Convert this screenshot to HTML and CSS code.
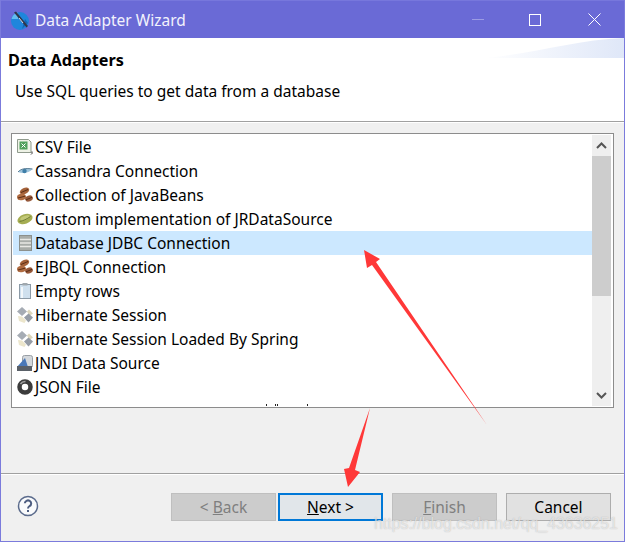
FILE: index.html
```html
<!DOCTYPE html>
<html lang="en">
<head>
<meta charset="utf-8">
<title>Data Adapter Wizard</title>
<link rel="stylesheet" href="styles.css">
</head>
<body>
<svg class="defs" width="0" height="0" aria-hidden="true">
  <defs>
    <symbol id="beans" viewBox="0 0 16 16">
      <ellipse cx="7.500" cy="4" rx="5" ry="3" fill="#a5623a" transform="rotate(-25 7.500 4)"/>
      <ellipse cx="4.500" cy="10" rx="4.500" ry="3.200" fill="#b06c42" transform="rotate(-10 4.500 10)"/>
      <ellipse cx="12" cy="11.500" rx="4" ry="3" fill="#96583a" transform="rotate(-20 12 11.500)"/>
      <path d="M4 5.500l7-3M1 11l7-1.800M9 12.800l6-2.500" stroke="#5a2e16" stroke-width="1" fill="none"/>
    </symbol>
    <symbol id="hibernate" viewBox="0 0 16 16">
      <path d="M5 0l5 4.500L5 9 0 4.500z" fill="#a6acb4"/>
      <path d="M10 4.500l2-2 4 4-3.500 2.500z" fill="#dcd6bc"/>
      <path d="M1 9l4 .5 4 4-1.500 2.500L2 14z" fill="#ece6cc"/>
      <path d="M11.500 6.500l4.500 4-4.500 5-4.500-5z" fill="#959ca6"/>
    </symbol>
  </defs>
</svg>
<div class="window">
  <header class="titlebar">
    <svg class="app-icon" viewBox="0 0 20 20" width="20" height="20" aria-hidden="true">
      <circle cx="10" cy="11" r="9" fill="#1f86dc"/>
      <path d="M1.500 9a9 9 0 0 1 6-6.500L8 9z" fill="#62bdf0"/>
      <path d="M12 19l6-6-3-4z" fill="#1566b4"/>
      <path d="M4 2.500l2-1 12 14.500-1.500 1.500z" fill="#30364a"/>
      <path d="M9 8l4 5" stroke="#d8dee8" stroke-width="1"/>
    </svg>
    <span class="title-text">Data Adapter Wizard</span>
    <div class="controls">
      <span class="control"><span class="ctl-min"></span></span>
      <span class="control"><span class="ctl-max"></span></span>
      <span class="control">
        <svg viewBox="0 0 13 13" width="13" height="13" aria-hidden="true"><path d="M.5.500l12 12M12.500.500l-12 12" stroke="#fff" stroke-width="1" fill="none"/></svg>
      </span>
    </div>
  </header>

  <section class="banner">
    <svg class="banner-art" viewBox="0 0 140 20" width="140" height="20" preserveAspectRatio="none" aria-hidden="true">
      <defs>
        <linearGradient id="fade" x1="0" x2="1" y1="0" y2="0">
          <stop offset="0" stop-color="#ffffff"/>
          <stop offset="1" stop-color="#dfe7f8"/>
        </linearGradient>
      </defs>
      <path d="M0 20C50 16 90 2 140 0v20z" fill="url(#fade)"/>
    </svg>
    <h1 class="banner-title">Data Adapters</h1>
    <p class="banner-desc">Use SQL queries to get data from a database</p>
  </section>

  <main class="content">
    <div class="listbox">
      <ul class="rows">
        <li class="row">
          <svg class="icon" viewBox="0 0 16 16" aria-hidden="true"><path d="M.5.500h11l2.500 2.500V13.500H.5z" fill="#eef2e6" stroke="#8f9a8c"/><rect x="2.500" y="2.500" width="8" height="8" fill="#4fa05a"/><path d="M4.500 4.500l4 4M8.500 4.500l-4 4" stroke="#fff"/><path d="M15 12.500v2l-1 1" stroke="#333" fill="none"/></svg>
          <span class="label">CSV File</span>
        </li>
        <li class="row">
          <svg class="icon" viewBox="0 0 16 16" aria-hidden="true"><path d="M1 9C4 5.500 9 5 15.500 6 12.500 9.500 6 11.500 1 9z" fill="#9fc4dc"/><circle cx="7.500" cy="8" r="2.200" fill="#3f7fa8"/><path d="M1 9C4 5.500 9 5 15.500 6" stroke="#5d7f96" fill="none"/></svg>
          <span class="label">Cassandra Connection</span>
        </li>
        <li class="row">
          <svg class="icon" aria-hidden="true"><use href="#beans"/></svg>
          <span class="label">Collection of JavaBeans</span>
        </li>
        <li class="row">
          <svg class="icon" viewBox="0 0 16 16" aria-hidden="true"><ellipse cx="8" cy="8" rx="7.800" ry="4.800" fill="#a5ad52" transform="rotate(-20 8 8)"/><ellipse cx="8" cy="7" rx="5" ry="2" fill="#c2c878" transform="rotate(-20 8 7)"/><path d="M2.500 10.500C6 10 10 8 13.500 5.500" stroke="#6f7a34" fill="none"/></svg>
          <span class="label">Custom implementation of JRDataSource</span>
        </li>
        <li class="row row-selected">
          <svg class="icon" viewBox="0 0 16 16" aria-hidden="true"><rect x="2.500" y="0.500" width="12" height="15" fill="#a8aca8" stroke="#8c908c"/><path d="M3 4.500h11M3 8h11M3 11.500h11" stroke="#e8e8e4" stroke-width="1.400"/></svg>
          <span class="label">Database JDBC Connection</span>
        </li>
        <li class="row">
          <svg class="icon" aria-hidden="true"><use href="#beans"/></svg>
          <span class="label">EJBQL Connection</span>
        </li>
        <li class="row">
          <svg class="icon" viewBox="0 0 16 16" aria-hidden="true"><rect x="2.500" y="1.500" width="11" height="14" fill="#cfe0ee" stroke="#8c9aa6"/><rect x="5.500" y="0" width="5" height="2.500" fill="#a0a8ae"/><path d="M5 4v11" stroke="#f2f7fb" stroke-width="2"/></svg>
          <span class="label">Empty rows</span>
        </li>
        <li class="row">
          <svg class="icon" aria-hidden="true"><use href="#hibernate"/></svg>
          <span class="label">Hibernate Session</span>
        </li>
        <li class="row">
          <svg class="icon" aria-hidden="true"><use href="#hibernate"/></svg>
          <span class="label">Hibernate Session Loaded By Spring</span>
        </li>
        <li class="row">
          <svg class="icon" viewBox="0 0 16 16" aria-hidden="true"><rect x="5.500" y=".5" width="10" height="12" rx="2" fill="#d4d8dc" stroke="#9aa0a6"/><path d="M0 12L8 3l3 9z" fill="#4a78b8"/><rect x="0" y="11" width="15" height="5" fill="#5a6068"/></svg>
          <span class="label">JNDI Data Source</span>
        </li>
        <li class="row">
          <svg class="icon" viewBox="0 0 16 16" aria-hidden="true"><circle cx="8" cy="8" r="5.500" fill="none" stroke="#3c3c3c" stroke-width="4.500"/><path d="M3.500 5a5.500 5.500 0 0 1 5-2.500" stroke="#a0a0a0" stroke-width="1.500" fill="none"/></svg>
          <span class="label">JSON File</span>
        </li>
        <li class="row row-clipped">
          <svg class="tips" viewBox="0 0 60 7" width="60" height="7" aria-hidden="true"><path d="M4 5h1v2H4zM13 5h1v2h-1zM15 5h1v2h-1zM45 5h1v2h-1z" fill="#222"/></svg>
        </li>
      </ul>
      <div class="scrollbar">
        <span class="scroll-btn">
          <svg viewBox="0 0 11 7" width="11" height="7" aria-hidden="true"><path d="M1 6l4.500-4.500L10 6" stroke="#555" stroke-width="2" fill="none"/></svg>
        </span>
        <span class="scroll-thumb"></span>
        <span class="scroll-track"></span>
        <span class="scroll-btn scroll-btn-down">
          <svg viewBox="0 0 11 7" width="11" height="7" aria-hidden="true"><path d="M1 1l4.500 4.500L10 1" stroke="#555" stroke-width="2" fill="none"/></svg>
        </span>
      </div>
    </div>
  </main>

  <footer class="footer">
    <svg class="help" viewBox="0 0 22 22" width="22" height="22" aria-hidden="true">
      <circle cx="11" cy="11" r="9.500" fill="#fafbfc" stroke="#5b6b8c" stroke-width="1.500"/>
      <path d="M7.800 8.300a3.200 3 0 1 1 4.800 2.700c-1.100.7-1.600 1.200-1.600 2.500" fill="none" stroke="#4d5d80" stroke-width="2"/>
      <rect x="10" y="15" width="2" height="2" fill="#4d5d80"/>
    </svg>
    <div class="buttons">
      <button class="btn btn-disabled" type="button">&lt; <u>B</u>ack</button>
      <button class="btn btn-primary" type="button"><u>N</u>ext &gt;</button>
      <button class="btn btn-disabled btn-gap" type="button"><u>F</u>inish</button>
      <button class="btn btn-gap" type="button">Cancel</button>
    </div>
  </footer>

  <svg class="annotations" viewBox="0 0 625 542" width="625" height="542" aria-hidden="true">
    <path d="M364 250L380 259 376 262 487 425 372 265 367 268z" fill="#ff3838"/>
    <path d="M370 408L355 470 360 472 348 487 344 469 349 468z" fill="#ff3838"/>
  </svg>
  <span class="watermark">https://blog.csdn.net/qq_43636251</span>
</div>
</body>
</html>
```
FILE: styles.css
```css
* {
  box-sizing: border-box;
}

html,
body {
  margin: 0;
  padding: 0;
  background: #f0f0f0;
}

.defs {
  position: absolute;
}

.window {
  position: relative;
  display: flex;
  flex-direction: column;
  width: 625px;
  height: 542px;
  overflow: hidden;
  background: #f0f0f0;
  border: 1px solid #7b7bdc;
  border-top: 0;
  font-family: "Noto Sans", "Open Sans", sans-serif;
  font-size: 15.5px;
  color: #000;
}

.titlebar {
  display: flex;
  align-items: center;
  flex: none;
  height: 38px;
  margin: 0 -1px;
  padding-left: 10px;
  background: #6a6ad6;
  border-top: 1px solid #7777dc;
  color: #f2f2fc;
}

.app-icon {
  flex: none;
  margin-right: 5px;
}

.title-text {
  font-size: 15.5px;
}

.controls {
  display: flex;
  margin-left: auto;
  margin-right: 2px;
}

.control {
  display: flex;
  align-items: center;
  justify-content: center;
  width: 58px;
  height: 37px;
}

.ctl-min {
  width: 12px;
  height: 1px;
  background: #9c9ce4;
}

.ctl-max {
  width: 12px;
  height: 12px;
  margin-right: 2px;
  border: 1px solid #fff;
}

.banner {
  position: relative;
  flex: none;
  height: 85px;
  padding: 11px 0 0 7px;
  background: #fff;
  border-bottom: 1px solid #fff;
  box-shadow: inset 0 -2px 0 -1px #a0a0a0;
}

.banner-art {
  position: absolute;
  top: 0;
  right: 0;
}

.banner-title {
  position: relative;
  margin: 0;
  font-size: 16.2px;
  font-weight: 700;
  line-height: 22px;
}

.banner-desc {
  margin: 9px 0 0 7px;
  font-size: 15.5px;
  line-height: 22px;
}

.content {
  flex: none;
  height: 350px;
  padding: 10px;
}

.listbox {
  display: flex;
  height: 275px;
  padding: 1px 2px 1px 1px;
  background: #fff;
  border: 1px solid #8c8c8c;
}

.rows {
  flex: none;
  width: 579px;
  height: 271px;
  margin: 0;
  padding: 0;
  overflow: hidden;
  list-style: none;
}

.row {
  display: flex;
  align-items: center;
  gap: 2px;
  height: 24px;
  padding-left: 4px;
  white-space: nowrap;
}

.row-selected {
  background: #cce8ff;
}

.row-clipped {
  align-items: flex-start;
  padding-left: 249px;
}

.icon {
  flex: none;
  width: 16px;
  height: 16px;
}

.scrollbar {
  display: flex;
  flex-direction: column;
  flex: none;
  width: 19px;
  height: 271px;
  background: #efefef;
}

.scroll-btn {
  display: flex;
  align-items: center;
  justify-content: center;
  flex: none;
  height: 21px;
}

.scroll-thumb {
  flex: none;
  height: 140px;
  background: #cdcdcd;
}

.scroll-track {
  flex: 1;
}

.footer {
  display: flex;
  flex: 1;
  align-items: flex-start;
  padding: 19px 13px 0 16px;
  border-top: 1px solid #a0a0a0;
  box-shadow: inset 0 1px 0 #fff;
}

.help {
  flex: none;
  margin-top: 2px;
}

.buttons {
  display: flex;
  margin-left: auto;
  gap: 2px;
}

.btn {
  width: 105px;
  height: 28px;
  padding: 0 0 1px;
  font: inherit;
  color: #000;
  background: #e1e1e1;
  border: 1px solid #adadad;
}

.btn-gap {
  margin-left: 7px;
}

.btn-disabled {
  color: #7f7f7f;
  background: #cccccc;
  border-color: #bfbfbf;
}

.btn-primary {
  background: #e1e6ea;
  border: 2px solid #0078d7;
}

.annotations {
  position: absolute;
  top: 0;
  left: -1px;
  pointer-events: none;
}

.watermark {
  position: absolute;
  left: 373px;
  top: 514px;
  font-family: "Liberation Sans", Arial, sans-serif;
  font-size: 15.9px;
  line-height: 20px;
  color: rgba(255, 255, 255, 0.6);
  text-shadow: 0 0 1px rgba(120, 120, 120, 0.5);
  white-space: nowrap;
}
```
